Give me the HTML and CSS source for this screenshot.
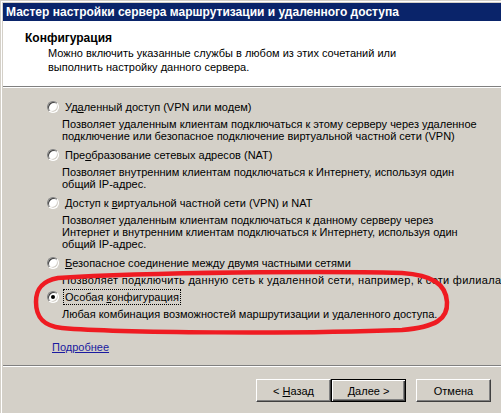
FILE: index.html
```html
<!DOCTYPE html>
<html lang="ru">
<head>
<meta charset="utf-8">
<title>Мастер настройки сервера маршрутизации и удаленного доступа</title>
<link rel="stylesheet" href="styles.css">
</head>
<body>
<div class="window">
  <div class="titlebar">Мастер настройки сервера маршрутизации и удаленного доступа</div>
  <div class="header">
    <div class="header-title">Конфигурация</div>
    <div class="header-desc">Можно включить указанные службы в любом из этих сочетаний или<br>выполнить настройку данного сервера.</div>
  </div>
  <div class="content">
    <div class="item">
      <div class="radio-row"><span class="radio"></span><span class="label">Уд<u>а</u>ленный доступ (VPN или модем)</span></div>
      <div class="desc">Позволяет удаленным клиентам подключаться к этому серверу через удаленное<br>подключение или безопасное подключение виртуальной частной сети (VPN)</div>
    </div>
    <div class="item">
      <div class="radio-row"><span class="radio"></span><span class="label">Пре<u>о</u>бразование сетевых адресов (NAT)</span></div>
      <div class="desc">Позволяет внутренним клиентам подключаться к Интернету, используя один<br>общий IP-адрес.</div>
    </div>
    <div class="item">
      <div class="radio-row"><span class="radio"></span><span class="label">Доступ к <u>в</u>иртуальной частной сети (VPN) и NAT</span></div>
      <div class="desc">Позволяет удаленным клиентам подключаться к данному серверу через<br>Интернет и внутренним клиентам подключаться к Интернету, используя один<br>общий IP-адрес.</div>
    </div>
    <div class="item">
      <div class="radio-row"><span class="radio"></span><span class="label"><u>Б</u>езопасное соединение между двумя частными сетями</span></div>
      <div class="desc desc-wide">Позволяет подключить данную сеть к удаленной сети, например, к сети филиала.</div>
    </div>
    <div class="item item-tight">
      <div class="radio-row"><span class="radio radio-checked"></span><span class="label label-focus">Особая <u>к</u>онфигурация</span></div>
      <div class="desc">Любая комбинация возможностей маршрутизации и удаленного доступа.</div>
    </div>
    <a class="more" href="#">Подробнее</a>
  </div>
  <div class="buttons">
    <button class="btn">&lt; <u>Н</u>азад</button>
    <button class="btn btn-default"><u>Д</u>алее &gt;</button>
    <button class="btn btn-cancel">Отмена</button>
  </div>
</div>
<svg class="mark" width="501" height="413" viewBox="0 0 501 413" xmlns="http://www.w3.org/2000/svg">
  <path d="M 58 278 C 150 272, 330 271, 402 273 C 432 275, 446 284, 447 302 C 448 319, 436 327, 402 330 C 300 334, 120 333, 62 328 C 42 326, 36 316, 36 302 C 36 290, 41 281, 58 278 Z" fill="none" stroke="#ef1b22" stroke-width="4.5" stroke-linejoin="round"/>
</svg>
</body>
</html>
```

FILE: styles.css
```css
html, body {
  margin: 0;
  padding: 0;
}
body {
  position: relative;
  width: 501px;
  height: 413px;
  overflow: hidden;
  background: #d4d0c8;
  font-family: "Liberation Sans", Arial, sans-serif;
  font-size: 11px;
  color: #000;
}
.window {
  height: 413px;
  box-sizing: border-box;
  padding: 3px 0 0 3px;
  background: #d4d0c8;
  box-shadow: inset 1px 1px 0 #d4d0c8, inset 2px 2px 0 #ffffff;
  display: flex;
  flex-direction: column;
}
.titlebar {
  height: 18px;
  line-height: 19px;
  background: #0a246a;
  color: #fff;
  font-weight: bold;
  font-size: 12px;
  padding-left: 3px;
  white-space: nowrap;
}
.header {
  height: 66px;
  box-sizing: border-box;
  background: #fff;
  padding: 10px 0 0 22px;
  border-bottom: 1px solid #808080;
  box-shadow: 0 1px 0 #fff;
  margin-bottom: 1px;
}
.header-title {
  font-weight: bold;
  font-size: 12px;
  line-height: 14px;
  white-space: nowrap;
}
.header-desc {
  margin: 1px 0 0 23px;
  line-height: 14px;
  white-space: nowrap;
}
.content {
  height: 278px;
  box-sizing: border-box;
  padding: 12px 0 0 0;
  border-bottom: 1px solid #808080;
  box-shadow: 0 1px 0 #fff;
  display: flex;
  flex-direction: column;
}
.item + .item {
  margin-top: 6px;
}
.item.item-tight {
  margin-top: 4px;
}
.radio-row {
  display: flex;
  align-items: center;
  height: 14px;
  line-height: 14px;
  padding-left: 44px;
  white-space: nowrap;
}
.radio {
  width: 12px;
  height: 12px;
  box-sizing: border-box;
  border-radius: 50%;
  background: #fff;
  border: 1px solid;
  border-color: #808080 #ffffff #ffffff #808080;
  box-shadow: inset 1px 1px 0 #404040, inset -1px -1px 0 #d4d0c8;
  margin-right: 6px;
  flex: none;
  position: relative;
}
.radio-checked::after {
  content: "";
  position: absolute;
  left: 3px;
  top: 3px;
  width: 4px;
  height: 4px;
  border-radius: 50%;
  background: #000;
}
.label-focus {
  outline: 1px dotted #000;
  outline-offset: 0;
  padding: 0 1px;
  margin-left: -1px;
}
.desc {
  margin: 4px 0 0 59px;
  line-height: 12px;
  white-space: nowrap;
}
.desc-wide {
  letter-spacing: 0.3px;
}
.more {
  align-self: flex-start;
  margin: 20px 0 0 49px;
  line-height: 14px;
  color: #1a1aa0;
  text-decoration: underline;
}
.buttons {
  display: flex;
  justify-content: flex-end;
  padding: 13px 10px 0 0;
}
.btn {
  width: 75px;
  height: 23px;
  box-sizing: border-box;
  margin: 0;
  padding: 0;
  font-family: inherit;
  font-size: 11px;
  color: #000;
  background: #d4d0c8;
  border: 1px solid;
  border-color: #ffffff #404040 #404040 #ffffff;
  box-shadow: inset -1px -1px 0 #808080, inset 1px 1px 0 #d4d0c8;
  border-radius: 0;
}
.btn-default {
  border: 1px solid #000;
  box-shadow: inset 1px 1px 0 #fff, inset -1px -1px 0 #404040, inset -2px -2px 0 #808080;
}
.btn-cancel {
  margin-left: 10px;
}
.mark {
  position: absolute;
  left: 0;
  top: 0;
  pointer-events: none;
}
```
